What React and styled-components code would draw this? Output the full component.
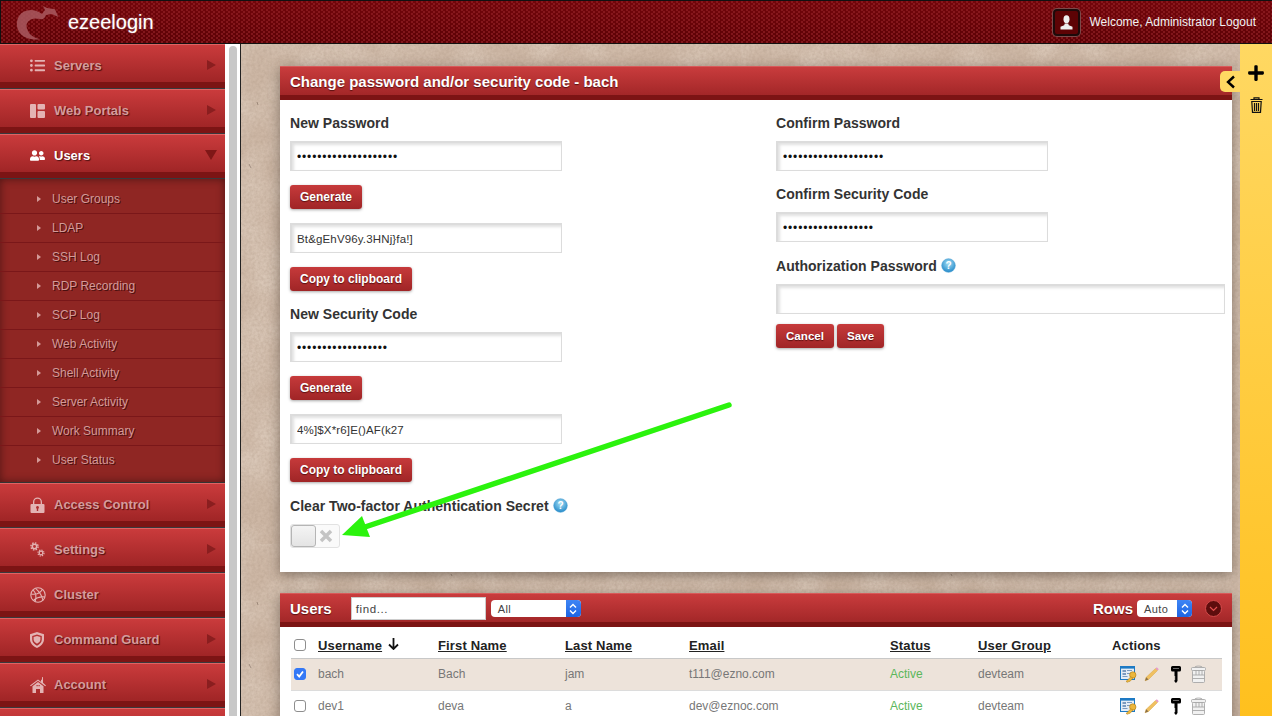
import React from "react";
import styled, { createGlobalStyle } from "styled-components";
import { FaListUl, FaUserFriends, FaPlus } from "react-icons/fa";

const paperSvg = `<svg xmlns='http://www.w3.org/2000/svg' width='500' height='500'><filter id='n'><feTurbulence type='fractalNoise' baseFrequency='0.35' numOctaves='4' stitchTiles='stitch'/><feColorMatrix values='0 0 0 0 0.42 0 0 0 0 0.31 0 0 0 0 0.23 0 0 0 0.6 -0.17'/></filter><filter id='b'><feTurbulence type='fractalNoise' baseFrequency='0.025' numOctaves='2' stitchTiles='stitch'/><feColorMatrix values='0 0 0 0 0.95 0 0 0 0 0.88 0 0 0 0 0.8 0 0 0 0.6 -0.18'/></filter><rect width='500' height='500' fill='#cdb7a5'/><rect width='500' height='500' filter='url(#b)'/><rect width='500' height='500' filter='url(#n)'/><g stroke='#5d4a3c' stroke-width='.8' fill='none' opacity='.55'><path d='M16 58l1 3M8 120l2 4M210 30l1 2M60 280l1 3M320 160l1 3M130 370l1 2M280 320l2 3M390 70l1 2M440 240l1 3'/></g></svg>`;
const paper = `url("data:image/svg+xml,${encodeURIComponent(paperSvg)}")`;

const Global = createGlobalStyle`
  html, body { margin: 0; padding: 0; background: #fff; height: 716px; overflow: hidden; }
  body { font-family: "Liberation Sans", Arial, sans-serif; }
  * { box-sizing: border-box; }
`;

const Page = styled.div`
  position: relative;
  width: 1272px;
  height: 716px;
  overflow: hidden;
  display: flex;
  flex-direction: column;
`;

const TopBar = styled.header`
  height: 44px;
  flex: none;
  display: flex;
  align-items: center;
  border: 1px solid #111;
  border-right: none;
  padding: 0 16px 0 15px;
  background-color: #6d0509;
  background-image:
    radial-gradient(circle at 1px 1px, rgba(150, 35, 40, 0.6) 1px, transparent 1.3px),
    radial-gradient(circle at 3px 3px, rgba(150, 35, 40, 0.6) 1px, transparent 1.3px),
    linear-gradient(#74060b, #5d0206);
  background-size: 5px 4px, 5px 4px, 100% 100%;
`;

const Logo = styled.svg`
  width: 44px;
  height: 36px;
  flex: none;
`;

const Brand = styled.span`
  margin-left: 8px;
  font-size: 20px;
  color: #fff;
  text-shadow: 0 0 2px rgba(255, 255, 255, 0.4);
`;

const Spacer = styled.div`
  flex: 1;
`;

const Avatar = styled.div`
  width: 27px;
  height: 27px;
  border-radius: 4px;
  border: 2px solid #1d0a0a;
  box-shadow: 0 0 0 1px #7a4a4a;
  background: #5d0305;
  display: flex;
  align-items: center;
  justify-content: center;
  margin-right: 9px;
`;

const Welcome = styled.span`
  font-size: 12px;
  color: #f2f2f2;
  white-space: nowrap;
`;

const Body = styled.div`
  flex: 1;
  display: flex;
  min-height: 0;
`;

const SideWrap = styled.aside`
  width: 241px;
  flex: none;
  display: flex;
  background: #fff;
  border-right: 1px solid #222;
  overflow: hidden;
`;

const SideMenu = styled.nav`
  width: 225px;
  flex: none;
`;

const ScrollTrack = styled.div`
  flex: 1;
  padding: 2px 3px 0 4px;
`;

const ScrollThumb = styled.div`
  height: 900px;
  background: #c8c8c8;
  border-radius: 4px;
`;

const MenuItem = styled.div`
  height: 45px;
  display: flex;
  align-items: center;
  padding: 0 9px 2px 30px;
  border-top: 1px solid #df6363;
  border-bottom: 1px solid #39393d;
  background: linear-gradient(#ca3b3c 0, #a02526 37px, #7c1414 37px, #7c1414 100%);
  color: ${(p) => (p.$active ? "#fff" : "#d59c9c")};
  font-size: 13px;
  font-weight: bold;
  text-shadow: 1px 1px 1px #4d1010;
`;

const MenuIcon = styled.span`
  width: 24px;
  flex: none;
  display: flex;
  align-items: center;
  font-size: 15px;
  color: ${(p) => (p.$active ? "#fff" : "#e3b3b3")};
`;

const MenuLabel = styled.span`
  flex: 1;
`;

const Tri = styled.span`
  width: 0;
  height: 0;
  margin-top: -2px;
  ${(p) =>
    p.$down
      ? `border-left: 6px solid transparent; border-right: 6px solid transparent; border-top: 10px solid #7f1717; margin-right: -1px;`
      : `border-top: 5px solid transparent; border-bottom: 5px solid transparent; border-left: 9px solid #8a1e1f;`}
`;

const SubMenu = styled.ul`
  list-style: none;
  margin: 0;
  padding: 6px 0 7px;
  height: 304px;
  background: #8f2623;
  box-shadow: inset 0 0 9px rgba(30, 10, 10, 0.55);
  border-bottom: 1px solid #333;
`;

const SubItem = styled.li`
  height: 29px;
  display: flex;
  align-items: center;
  padding-left: 37px;
  font-size: 12px;
  color: #d49a98;
  text-shadow: 1px 1px 0 #4a0f0f;
  border-bottom: 1px solid ${(p) => (p.$last ? "transparent" : "#7a1719")};
  &::before {
    content: "";
    border-top: 3px solid transparent;
    border-bottom: 3px solid transparent;
    border-left: 4px solid #d49a98;
    margin-right: 11px;
  }
`;

const Main = styled.main`
  flex: 1;
  min-width: 0;
  padding: 22px 8px 0 39px;
  background-image: ${paper};
  overflow: hidden;
`;

const Panel = styled.section`
  background: #fff;
  box-shadow: 0 3px 12px rgba(40, 30, 25, 0.45);
  margin-bottom: 21px;
`;

const PanelHead = styled.div`
  height: 34px;
  padding: 0 10px 4px;
  display: flex;
  align-items: center;
  background: linear-gradient(#c93c3d 0, #a32728 28px, #7c1414 28px, #7c1414 100%);
  border-top: 1px solid #d85a5a;
  color: #fff;
  font-size: 15px;
  font-weight: bold;
  text-shadow: 0 1px 1px #5a1010;
`;

const FormBody = styled.div`
  height: 472px;
  display: flex;
  padding: 15px 7px 0 10px;
`;

const LeftCol = styled.div`
  width: 486px;
  flex: none;
`;

const RightCol = styled.div`
  flex: 1;
`;

const Label = styled.div`
  height: 16px;
  line-height: 16px;
  margin-bottom: 10px;
  font-size: 14px;
  font-weight: bold;
  letter-spacing: 0.03px;
  color: #333;
  display: flex;
  align-items: center;
  gap: 4px;
  svg {
    margin-top: -2px;
  }
`;

const Field = styled.input`
  display: block;
  width: ${(p) => (p.$wide ? "449px" : "272px")};
  height: 30px;
  padding: 0 4px 0 5px;
  border: 1px solid #dcdcdc;
  border-top-width: 2px;
  border-left-width: 2px;
  outline: none;
  background: #fff;
  box-shadow: inset 2px 2px 3px rgba(0, 0, 0, 0.12);
  font-family: "Liberation Sans", Arial, sans-serif;
  font-size: 11.5px;
  letter-spacing: 0.15px;
  color: #333;
  margin-bottom: ${(p) => p.$mb}px;
  &[type="password"] {
    font-size: 12px;
    letter-spacing: 0.85px;
    color: #111;
  }
`;

const RedButton = styled.button`
  display: block;
  height: 24px;
  padding: 0 10px;
  border: none;
  border-radius: 3px;
  background: linear-gradient(#c63a3b, #a02526);
  box-shadow: 0 1px 3px rgba(0, 0, 0, 0.35);
  color: #fff;
  font-family: "Liberation Sans", Arial, sans-serif;
  font-size: 12px;
  font-weight: bold;
  text-shadow: 0 1px 1px #5a1010;
  margin-bottom: ${(p) => p.$mb ?? 14}px;
`;

const ButtonRow = styled.div`
  display: flex;
  gap: 3px;
  button {
    font-size: 11.6px;
    padding-bottom: 2px;
  }
`;

const Toggle = styled.div`
  width: 50px;
  height: 24px;
  border: 1px solid #e2e2e2;
  border-radius: 3px;
  background: #fafafa;
  display: flex;
  align-items: center;
`;

const Knob = styled.div`
  width: 25px;
  height: 22px;
  border: 1px solid #b5b5b5;
  border-radius: 3px;
  background: linear-gradient(#f4f4f4, #e4e4e4);
`;

const Cross = styled.svg`
  width: 14px;
  height: 14px;
  margin-left: 3px;
`;

const TableHead = styled(PanelHead)``;

const FindInput = styled.div`
  width: 135px;
  height: 23px;
  margin-left: 19px;
  padding: 0 4px;
  display: flex;
  align-items: center;
  background: #fff;
  border: 1px solid #ccc;
  font-size: 11.5px;
  letter-spacing: 0.6px;
  font-weight: normal;
  color: #444;
  text-shadow: none;
`;

const SelectBox = styled.div`
  width: ${(p) => p.$w}px;
  height: 17px;
  margin-left: ${(p) => p.$ml}px;
  border-radius: 4px;
  background: #fff;
  display: flex;
  align-items: center;
  overflow: hidden;
  font-size: 11px;
  font-weight: normal;
  letter-spacing: 0.4px;
  color: #444;
  text-shadow: none;
`;

const SelectText = styled.span`
  flex: 1;
  padding-left: 7px;
`;

const SelectArrow = styled.span`
  width: 15px;
  height: 100%;
  background: linear-gradient(#3e85f5, #1d64e3);
  display: flex;
  align-items: center;
  justify-content: center;
`;

const RoundToggle = styled.div`
  width: 17px;
  height: 17px;
  margin-left: 13px;
  border-radius: 50%;
  background: #5e0d0d;
  border: 1px solid #d34a4a;
  display: flex;
  align-items: center;
  justify-content: center;
`;

const RowsLabel = styled.span`
  font-size: 15px;
`;

const TableWrap = styled.div`
  padding: 0 10px 0 11px;
`;

const Table = styled.table`
  width: 931px;
  table-layout: fixed;
  border-collapse: collapse;
  font-size: 12px;
`;

const Th = styled.th`
  height: 31px;
  padding: 6px 0 0;
  text-align: left;
  font-size: 13px;
  font-weight: bold;
  letter-spacing: 0.15px;
  color: #222;
  border-bottom: 1px solid #c8c8c8;
`;

const SortLink = styled.span`
  text-decoration: underline;
`;

const SortArrow = styled.svg`
  width: 11px;
  height: 12px;
  margin-left: 2px;
`;

const Tr = styled.tr`
  background: ${(p) => (p.$sel ? "#ede3da" : "#fff")};
  border-bottom: 1px solid #dcdcdc;
`;

const Td = styled.td`
  height: 32px;
  padding: 0;
  color: ${(p) => (p.$green ? "#5bb75b" : "#777")};
`;

const Check = styled.span`
  display: block;
  width: 12px;
  height: 12px;
  margin-left: 3px;
  border-radius: 3px;
  border: 1px solid ${(p) => (p.$on ? "#3478f6" : "#8e8e8e")};
  background: ${(p) => (p.$on ? "#3478f6" : "#fff")};
  color: #fff;
`;

const Tick = styled.svg`
  display: block;
  width: 10px;
  height: 10px;
`;

const Actions = styled.div`
  display: grid;
  grid-template-columns: 24px 27px 20px 15px;
  align-items: center;
  padding-left: 8px;
  svg {
    display: block;
  }
`;

const Dock = styled.aside`
  width: 32px;
  flex: none;
  background: linear-gradient(#ffd862, #ffc01e);
  display: flex;
  flex-direction: column;
  align-items: center;
  padding-top: 20px;
  gap: 15px;
  font-size: 18px;
  color: #000;
`;

const DockTab = styled.div`
  position: absolute;
  left: 1220px;
  top: 71px;
  width: 20px;
  height: 21px;
  background: #ffd862;
  border-radius: 5px 0 0 5px;
  display: flex;
  align-items: center;
  justify-content: center;
`;

const Overlay = styled.svg`
  position: absolute;
  left: 0;
  top: 0;
  width: 1272px;
  height: 716px;
  pointer-events: none;
`;

const Help = () => (
  <svg width="15" height="15" viewBox="0 0 15 15">
    <defs>
      <radialGradient id="hb" cx="50%" cy="35%" r="65%">
        <stop offset="0" stopColor="#a6e0f5" />
        <stop offset="1" stopColor="#2389c9" />
      </radialGradient>
    </defs>
    <circle cx="7.5" cy="7.5" r="6.8" fill="url(#hb)" stroke="#4aa0d4" strokeWidth=".6" />
    <text x="7.5" y="11.2" textAnchor="middle" fontSize="10" fontWeight="bold" fill="#fff" fontFamily="Liberation Sans">?</text>
  </svg>
);

const PortalIcon = () => (
  <svg width="15" height="14" viewBox="0 0 15 14" fill="currentColor">
    <rect x="0" y="0" width="6" height="14" rx="1" />
    <rect x="7.5" y="0" width="7.5" height="5.5" rx="1" />
    <rect x="7.5" y="7" width="7.5" height="7" rx="1" />
  </svg>
);

const LockIcon = () => (
  <svg width="15" height="16" viewBox="0 0 15 16" fill="currentColor">
    <path fillRule="evenodd" d="M3 7V5a4.500 4.500 0 0 1 9 0v2h1.500a1 1 0 0 1 1 1v7a1 1 0 0 1-1 1h-12a1 1 0 0 1-1-1V8a1 1 0 0 1 1-1zM4.300 7h6.400V5a3.200 3.200 0 0 0-6.400 0zM7.500 9a1.500 1.500 0 0 0-.7 2.800V14h1.400v-2.200A1.500 1.500 0 0 0 7.500 9z" />
  </svg>
);

const GearsIcon = () => (
  <svg width="15" height="15" viewBox="0 0 15 15" fill="none" stroke="currentColor">
    <circle cx="4.500" cy="4.500" r="2.200" strokeWidth="1.500" />
    <circle cx="4.500" cy="4.500" r="3.600" strokeWidth="1.400" strokeDasharray="1.500 1.330" />
    <circle cx="11" cy="11" r="1.800" strokeWidth="1.200" />
    <circle cx="11" cy="11" r="3" strokeWidth="1.200" strokeDasharray="1.300 1.060" />
  </svg>
);

const ClusterIcon = () => (
  <svg width="16" height="16" viewBox="0 0 16 16" fill="none" stroke="currentColor" strokeWidth="1.1">
    <circle cx="8" cy="8" r="7.2" />
    <path d="M3 2.8c3 3 3.5 7.500 2.200 11.800M1 7c5 1 9-.5 11.500-4.800M5.500 1.300c3.500 3 6.500 7 7.500 12M3.500 13.500C6 11 10 9.500 15 10" />
  </svg>
);

const ShieldIcon = () => (
  <svg width="14" height="16" viewBox="0 0 14 16" fill="currentColor">
    <path fillRule="evenodd" d="M7 0l7 2.300v5c0 4-3 7-7 8.700-4-1.700-7-4.700-7-8.700v-5zM7 2.500L2.200 4v3.500c0 2.700 2 4.800 4.800 6.200 2.800-1.400 4.800-3.500 4.800-6.200V4z" />
    <path d="M7 4l3.400 1.100v2.400c0 1.800-1.400 3.200-3.400 4.200-2-1-3.400-2.400-3.400-4.200V5.100z" />
  </svg>
);

const HouseIcon = () => (
  <svg width="16" height="16" viewBox="0 0 16 16" fill="currentColor">
    <path d="M0 8.500L8 2.500l3 2.200V2.800h1V0l1 .3v5.500l3 2.700-.8.800L8 3.800.8 9.300z" />
    <path fillRule="evenodd" d="M2.500 9.300L8 5l5.500 4.300V16h-3.500v-4H6v4H2.500zM6.500 8h1.200v1.200H6.500zM8.500 8h1.200v1.200H8.500z" />
  </svg>
);

const UserGlyph = () => (
  <svg width="13" height="15" viewBox="0 0 13 15" fill="#eee">
    <ellipse cx="6.500" cy="4.200" rx="3" ry="4" />
    <path d="M4.800 8.500h3.400l.6 1.700 3.700 1.500V14.500H.5v-2.800l3.700-1.500z" />
  </svg>
);

const Updown = () => (
  <svg width="8" height="12" viewBox="0 0 8 12" fill="none" stroke="#fff" strokeWidth="1.400">
    <path d="M1 4.500l3-3 3 3M1 7.500l3 3 3-3" />
  </svg>
);

const WinKey = () => (
  <svg width="17" height="18" viewBox="0 0 17 18">
    <rect x=".5" y="1.500" width="14" height="13" fill="#e4edf6" stroke="#1e7ac4" />
    <rect x="1" y="2" width="13" height="1.600" fill="#1e7ac4" />
    <path d="M2.500 5h3.500v2H2.500zM2.500 8h3.500v2H2.500zM7 5h5v1H7zM7 8h3v1H7zM2.500 11h5v1h-5z" fill="#7b9bc0" />
    <circle cx="12.800" cy="10" r="3.200" fill="#ecb63c" stroke="#a97a16" strokeWidth=".6" />
    <path d="M10.800 11.800L6 16.500l1.800.8 1.200-1 .8.300 3.200-3.500z" fill="#ecb63c" stroke="#a97a16" strokeWidth=".5" />
  </svg>
);

const Pencil = () => (
  <svg width="15" height="16" viewBox="0 0 15 16">
    <path d="M11.500 2.500l2 2-9 9-3.500 1.300 1.200-3.500z" fill="#f0c060" stroke="#d8a648" strokeWidth=".5" />
    <path d="M11.500 2.500l1.300-1.300 2 2-1.300 1.300z" fill="#e79ac8" />
    <path d="M2.200 11.300L1 14.800l3.500-1.300z" fill="#8a7048" />
  </svg>
);

const BlackKey = () => (
  <svg width="10" height="18" viewBox="0 0 10 18" fill="#000">
    <path d="M1.500 1h7A1.500 1.500 0 0 1 10 2.500V5a1.500 1.500 0 0 1-1.500 1.500H6.500V16l-1.500 2-1.500-1.500V15l1-1-1-1 1-1-1-1V6.500h-2A1.500 1.500 0 0 1 0 5V2.500A1.500 1.500 0 0 1 1.500 1z" />
    <rect x="2" y="3" width="6" height=".9" fill="#777" />
  </svg>
);

const GreyBin = () => (
  <svg width="15" height="18" viewBox="0 0 15 18" fill="#f1f1f1" stroke="#a7a7a7" strokeWidth=".9">
    <path d="M3.500 2.500C4 .6 11 .6 11.500 2.500" fill="none" />
    <rect x=".5" y="2.500" width="14" height="3" rx="1" />
    <rect x="1.500" y="5.500" width="12" height="12" rx="1" />
    <path d="M1.500 10h12M1.500 13.500h12M5 5.500V10M8 5.500V10M11 5.500V10" />
  </svg>
);

const DockBin = () => (
  <svg width="13" height="16" viewBox="0 0 13 16" fill="none" stroke="#111" strokeWidth="1.200">
    <path d="M4 2V.8h5V2M.5 2.500h12M1.800 4.500l.7 10.800h8l.7-10.800zM4.500 6v8M6.500 6v8M8.500 6v8" />
  </svg>
);

const menuTop = [
  { label: "Servers", icon: <FaListUl />, arrow: true },
  { label: "Web Portals", icon: <PortalIcon />, arrow: true },
];
const menuBottom = [
  { label: "Access Control", icon: <LockIcon />, arrow: true },
  { label: "Settings", icon: <GearsIcon />, arrow: true },
  { label: "Cluster", icon: <ClusterIcon />, arrow: false },
  { label: "Command Guard", icon: <ShieldIcon />, arrow: true },
  { label: "Account", icon: <HouseIcon />, arrow: true },
  { label: "", icon: null, arrow: false },
];
const subItems = ["User Groups", "LDAP", "SSH Log", "RDP Recording", "SCP Log", "Web Activity", "Shell Activity", "Server Activity", "Work Summary", "User Status"];
const users = [
  { u: "bach", f: "Bach", l: "jam", e: "t111@ezno.com", sel: true },
  { u: "dev1", f: "deva", l: "a", e: "dev@eznoc.com", sel: false },
];

const Item = ({ m, active }) => (
  <MenuItem $active={active}>
    <MenuIcon $active={active}>{m.icon}</MenuIcon>
    <MenuLabel>{m.label}</MenuLabel>
    {m.arrow && <Tri />}
  </MenuItem>
);

export default function App() {
  return (
    <Page>
      <Global />
      <TopBar>
        <Logo viewBox="0 0 44 36">
          <path
            fill="#a9595f"
            opacity=".85"
            d="M26 10C18 4 8 5 3 12c-5 9-1 19 8 22 4 1.500 9 2 13 1-7-1-13-6-13.500-13C10.500 17 16 13 24 15c3 .8 5-1 6-4l5.700-1 6.600 3-3.300-7.700L31 4l-4-2 2 4z"
          />
        </Logo>
        <Brand>ezeelogin</Brand>
        <Spacer />
        <Avatar><UserGlyph /></Avatar>
        <Welcome>Welcome, Administrator Logout</Welcome>
      </TopBar>
      <Body>
        <SideWrap>
          <SideMenu>
            {menuTop.map((m) => <Item key={m.label} m={m} />)}
            <MenuItem $active>
              <MenuIcon $active><FaUserFriends /></MenuIcon>
              <MenuLabel>Users</MenuLabel>
              <Tri $down />
            </MenuItem>
            <SubMenu>
              {subItems.map((s, i) => <SubItem key={s} $last={i === subItems.length - 1}>{s}</SubItem>)}
            </SubMenu>
            {menuBottom.map((m) => <Item key={m.label} m={m} />)}
          </SideMenu>
          <ScrollTrack><ScrollThumb /></ScrollTrack>
        </SideWrap>
        <Main>
          <Panel>
            <PanelHead>Change password and/or security code - bach</PanelHead>
            <FormBody>
              <LeftCol>
                <Label>New Password</Label>
                <Field readOnly type="password" value="Bt&gEhV96y.3HNj}fa!]" $mb={14} />
                <RedButton>Generate</RedButton>
                <Field readOnly value="Bt&gEhV96y.3HNj}fa!]" $mb={14} />
                <RedButton $mb={15}>Copy to clipboard</RedButton>
                <Label>New Security Code</Label>
                <Field readOnly type="password" value="4%]$X*r6]E()AF(k27" $mb={14} />
                <RedButton>Generate</RedButton>
                <Field readOnly value="4%]$X*r6]E()AF(k27" $mb={14} />
                <RedButton $mb={16}>Copy to clipboard</RedButton>
                <Label>Clear Two-factor Authentication Secret <Help /></Label>
                <Toggle>
                  <Knob />
                  <Cross viewBox="0 0 14 14">
                    <path d="M2 2l10 10M12 2L2 12" stroke="#c4c4c4" strokeWidth="3.500" />
                  </Cross>
                </Toggle>
              </LeftCol>
              <RightCol>
                <Label>Confirm Password</Label>
                <Field readOnly type="password" value="Bt&gEhV96y.3HNj}fa!]" $mb={15} />
                <Label>Confirm Security Code</Label>
                <Field readOnly type="password" value="4%]$X*r6]E()AF(k27" $mb={16} />
                <Label>Authorization Password <Help /></Label>
                <Field readOnly $wide value="" $mb={10} />
                <ButtonRow>
                  <RedButton $mb={0}>Cancel</RedButton>
                  <RedButton $mb={0}>Save</RedButton>
                </ButtonRow>
              </RightCol>
            </FormBody>
          </Panel>
          <Panel>
            <TableHead>
              Users
              <FindInput>find...</FindInput>
              <SelectBox $w={90} $ml={5}>
                <SelectText>All</SelectText>
                <SelectArrow><Updown /></SelectArrow>
              </SelectBox>
              <Spacer />
              <RowsLabel>Rows</RowsLabel>
              <SelectBox $w={55} $ml={4}>
                <SelectText>Auto</SelectText>
                <SelectArrow><Updown /></SelectArrow>
              </SelectBox>
              <RoundToggle>
                <svg width="9" height="6" viewBox="0 0 9 6" fill="none" stroke="#e2504f" strokeWidth="1.200"><path d="M1 1l3.500 3.500L8 1" /></svg>
              </RoundToggle>
            </TableHead>
            <TableWrap>
              <Table>
                <colgroup>
                  <col width="27" /><col width="120" /><col width="127" /><col width="124" />
                  <col width="201" /><col width="88" /><col width="134" /><col width="110" />
                </colgroup>
                <thead>
                  <tr>
                    <Th><Check /></Th>
                    <Th><SortLink>Username</SortLink> <SortArrow viewBox="0 0 11 12" fill="none" stroke="#111" strokeWidth="1.800"><path d="M5.500 0v11M1 6.500l4.500 4.500L10 6.500" /></SortArrow></Th>
                    <Th><SortLink>First Name</SortLink></Th>
                    <Th><SortLink>Last Name</SortLink></Th>
                    <Th><SortLink>Email</SortLink></Th>
                    <Th><SortLink>Status</SortLink></Th>
                    <Th><SortLink>User Group</SortLink></Th>
                    <Th>Actions</Th>
                  </tr>
                </thead>
                <tbody>
                  {users.map((r) => (
                    <Tr key={r.u} $sel={r.sel}>
                      <Td>
                        <Check $on={r.sel}>
                          {r.sel && (
                            <Tick viewBox="0 0 10 10" fill="none" stroke="#fff" strokeWidth="1.800"><path d="M2 5.200l2.200 2.300L8 2.500" /></Tick>
                          )}
                        </Check>
                      </Td>
                      <Td>{r.u}</Td>
                      <Td>{r.f}</Td>
                      <Td>{r.l}</Td>
                      <Td>{r.e}</Td>
                      <Td $green>Active</Td>
                      <Td>devteam</Td>
                      <Td>
                        <Actions><WinKey /><Pencil /><BlackKey /><GreyBin /></Actions>
                      </Td>
                    </Tr>
                  ))}
                </tbody>
              </Table>
            </TableWrap>
          </Panel>
        </Main>
        <Dock>
          <FaPlus />
          <DockBin />
        </Dock>
      </Body>
      <DockTab>
        <svg width="11" height="14" viewBox="0 0 11 14" fill="none" stroke="#000" strokeWidth="2.400"><path d="M9 1.500L3 7l6 5.500" /></svg>
      </DockTab>
      <Overlay viewBox="0 0 1272 716">
        <path d="M729 405L365 527" stroke="#2bf30d" strokeWidth="5.500" strokeLinecap="round" />
        <path d="M342 535l20-19 8 21z" fill="#2bf30d" />
      </Overlay>
    </Page>
  );
}
